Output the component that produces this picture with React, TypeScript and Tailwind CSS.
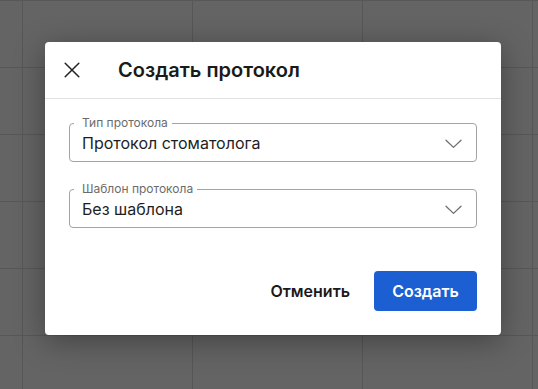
import { useState } from 'react';

interface SelectFieldProps {
  label: string;
  value: string;
}

function Chevron() {
  return (
    <svg width="17" height="10" viewBox="0 0 17 10" fill="none" className="shrink-0">
      <path d="M1 1.2L8.5 8.4L16 1.2" stroke="#6e6e6e" strokeWidth="1.3" strokeLinecap="round" strokeLinejoin="round" />
    </svg>
  );
}

function SelectField({ label, value }: SelectFieldProps) {
  return (
    <div className="relative h-[39px] rounded border border-[#a3a3a3] bg-white">
      <span className="absolute -top-[9px] left-[4px] bg-white pl-[8px] pr-[4px] text-[12px] leading-4 text-[#6b6b6b]">
        {label}
      </span>
      <div className="flex h-full items-start justify-between pl-[12px] pr-[14px] pt-[7px]">
        <span className="text-[16px] leading-6 text-[#1e1e1e]">{value}</span>
        <div className="pt-[8px]">
          <Chevron />
        </div>
      </div>
    </div>
  );
}

function CreateProtocolModal({ onClose }: { onClose: () => void }) {
  return (
    <div className="w-[456px] rounded bg-white shadow-[0_6px_30px_rgba(0,0,0,0.35)]">
      <div className="flex h-[57px] items-center gap-[38px] border-b border-[#e3e3e3] pl-[19px]">
        <button onClick={onClose} className="flex h-4 w-4 items-center justify-center">
          <svg width="16" height="16" viewBox="0 0 16 16" fill="none">
            <path d="M1.2 1.2L14.8 14.8M14.8 1.2L1.2 14.8" stroke="#222" strokeWidth="1.5" strokeLinecap="round" />
          </svg>
        </button>
        <div className="text-[20px] font-semibold text-[#1a1a1a]">Создать протокол</div>
      </div>

      <div className="flex flex-col gap-[27px] px-6 pt-6">
        <SelectField label="Тип протокола" value="Протокол стоматолога" />
        <SelectField label="Шаблон протокола" value="Без шаблона" />
      </div>

      <div className="flex items-center justify-end gap-6 px-6 pb-6 pt-[43px]">
        <button onClick={onClose} className="text-[16px] font-semibold text-[#1a1a1a]">
          Отменить
        </button>
        <button className="h-10 w-[103px] rounded bg-[#1b5fd2] text-[16px] font-semibold text-white">
          Создать
        </button>
      </div>
    </div>
  );
}

export default function App() {
  const [open, setOpen] = useState<boolean>(true);
  const cells = Array.from({ length: 30 });

  return (
    <div className="relative h-[389px] w-[538px] overflow-hidden bg-[#646464] font-['Inter','Noto_Sans',sans-serif]">
      <div className="ml-[-148px] grid grid-cols-[repeat(5,170px)] auto-rows-[67px]">
        {cells.map((_, i) => (
          <div key={i} className="border-l border-t border-[#575757]" />
        ))}
      </div>

      {open && (
        <div className="absolute inset-0 pl-[45px] pt-[42px]">
          <CreateProtocolModal onClose={() => setOpen(false)} />
        </div>
      )}
    </div>
  );
}
